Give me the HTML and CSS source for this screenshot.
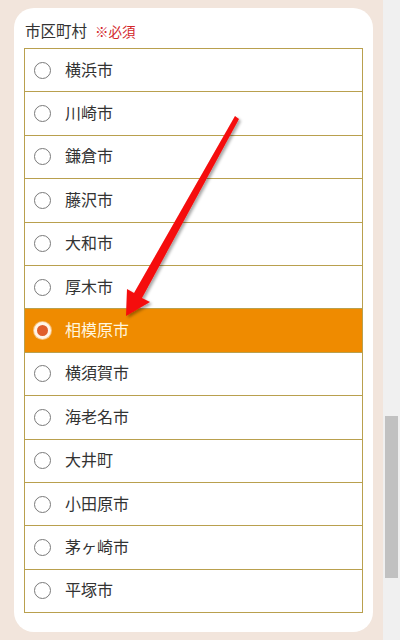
FILE: index.html
```html
<!DOCTYPE html>
<html lang="ja">
<head>
<meta charset="utf-8">
<link rel="stylesheet" href="styles.css">
</head>
<body>
<div class="page">
  <div class="main">
    <div class="card">
      <div class="label">市区町村<span class="req">※必須</span></div>
      <ul class="options">
        <li class="opt"><span class="radio"></span><span class="name">横浜市</span></li>
        <li class="opt"><span class="radio"></span><span class="name">川崎市</span></li>
        <li class="opt"><span class="radio"></span><span class="name">鎌倉市</span></li>
        <li class="opt"><span class="radio"></span><span class="name">藤沢市</span></li>
        <li class="opt"><span class="radio"></span><span class="name">大和市</span></li>
        <li class="opt"><span class="radio"></span><span class="name">厚木市</span></li>
        <li class="opt selected"><span class="radio"></span><span class="name">相模原市</span></li>
        <li class="opt"><span class="radio"></span><span class="name">横須賀市</span></li>
        <li class="opt"><span class="radio"></span><span class="name">海老名市</span></li>
        <li class="opt"><span class="radio"></span><span class="name">大井町</span></li>
        <li class="opt"><span class="radio"></span><span class="name">小田原市</span></li>
        <li class="opt"><span class="radio"></span><span class="name">茅ヶ崎市</span></li>
        <li class="opt"><span class="radio"></span><span class="name">平塚市</span></li>
      </ul>
    </div>
  </div>
  <div class="scrollbar"><div class="thumb"></div></div>
  <svg class="arrow" width="400" height="640" viewBox="0 0 400 640">
    <defs>
      <filter id="sh" x="-20%" y="-20%" width="140%" height="140%">
        <feDropShadow dx="2" dy="2" stdDeviation="1.5" flood-color="#000" flood-opacity="0.35"/>
      </filter>
    </defs>
    <polygon filter="url(#sh)" fill="#f50a0a" points="126,316 127,289 134,293 235,116 239,119 142,298 150,302"/>
  </svg>
</div>
</body>
</html>
```
FILE: styles.css
```css
html, body {
  margin: 0;
  padding: 0;
}
body {
  background: #f2e5dc;
  font-family: "Noto Sans CJK JP", "Noto Sans", sans-serif;
  color: #333;
}
.page {
  position: relative;
  display: flex;
  width: 400px;
  height: 640px;
  overflow: hidden;
}
.main {
  flex: 1;
  padding: 8px 10px 0 14px;
}
.card {
  background: #fff;
  border-radius: 20px;
  padding: 8px 10px 20px 10px;
  height: 624px;
  box-sizing: border-box;
}
.label {
  font-size: 15.5px;
  line-height: 28px;
  height: 32px;
  color: #333;
  padding-left: 1px;
}
.req {
  color: #d3262a;
  font-size: 13.5px;
  margin-left: 8px;
}
.options {
  list-style: none;
  margin: 0;
  padding: 0;
  border: 1px solid #b9a04e;
  border-bottom: none;
}
.opt {
  display: flex;
  align-items: center;
  height: 43.4px;
  box-sizing: border-box;
  border-bottom: 1px solid #b9a04e;
  font-size: 16px;
}
.radio {
  width: 17px;
  height: 17px;
  box-sizing: border-box;
  border: 1px solid #7a7a7a;
  border-radius: 50%;
  margin-left: 9px;
  margin-right: 14px;
  background: #fff;
}
.name {
  color: #333;
  line-height: 20px;
  padding-bottom: 3px;
}
.opt.selected {
  background: #ef8b00;
}
.opt.selected .name {
  color: #fff6de;
}
.opt.selected .radio {
  border: 3.5px solid #fff5e8;
  background: #e05e2b;
  box-shadow: 0 0 0 1px #f7c07a;
}
.scrollbar {
  width: 17px;
  height: 640px;
  background: #f0f0f0;
  position: relative;
}
.thumb {
  margin: 416px 2px 0 2px;
  height: 162px;
  background: #c1c1c1;
}
.arrow {
  position: absolute;
  top: 0;
  left: 0;
  pointer-events: none;
}
```
